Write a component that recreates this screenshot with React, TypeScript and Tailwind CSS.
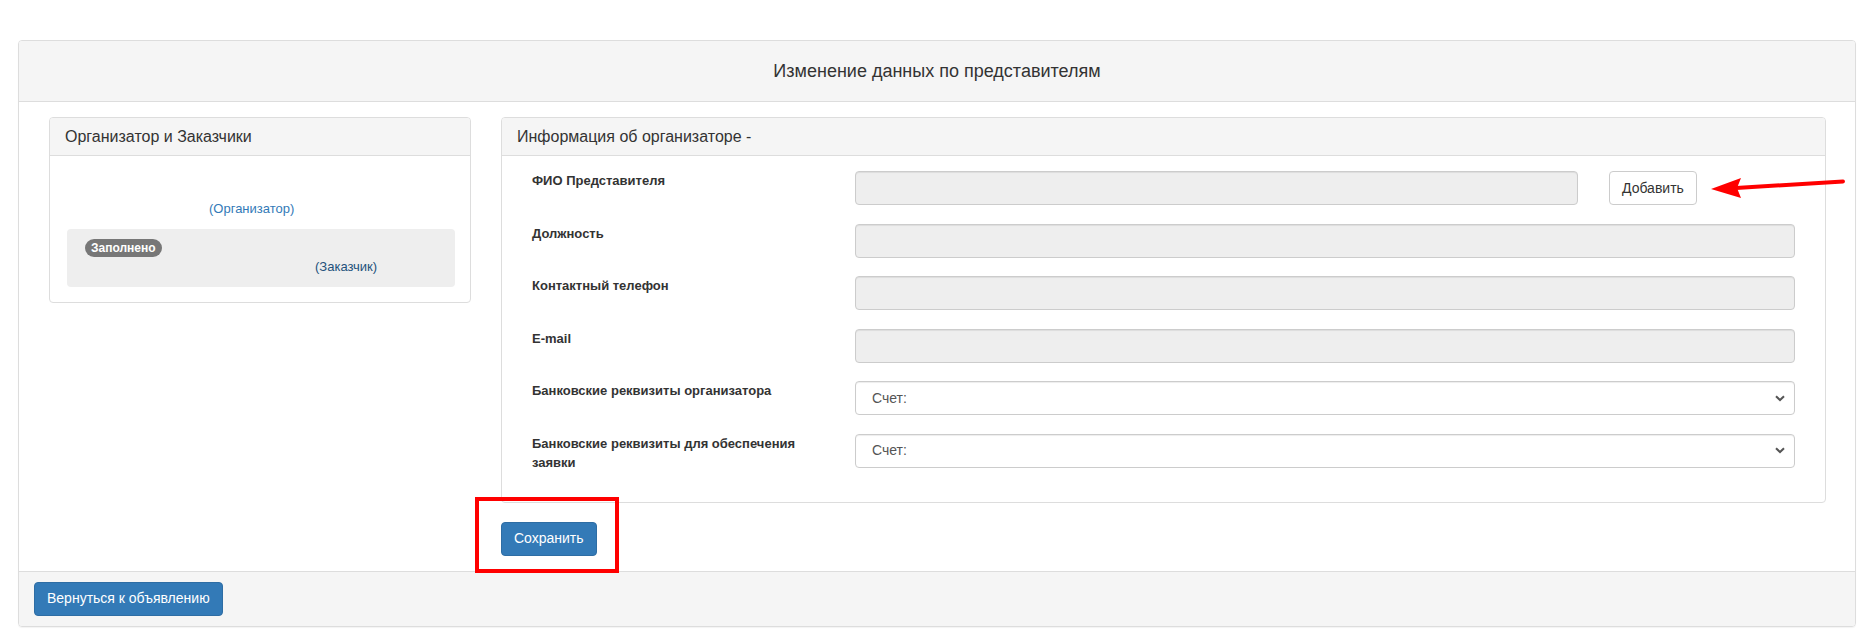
import React from "react";

const labelCls = "text-[13px] font-bold leading-[19px] text-[#333] pr-[30px]";
const inputCls =
  "h-[34px] rounded-[4px] border border-[#ccc] bg-[#eee] shadow-[inset_0_1px_1px_rgba(0,0,0,0.075)]";

const Chevron = () => (
  <svg width="10" height="7" viewBox="0 0 10 7" className="text-[#555]">
    <path d="M1 1.2 L5 5 L9 1.2" fill="none" stroke="currentColor" strokeWidth="2" />
  </svg>
);

const SelectBox = ({ text }: { text: string }) => (
  <div className="h-[34px] rounded-[4px] border border-[#ccc] bg-white flex items-center justify-between pl-[16px] pr-[9px] text-[14px] text-[#555] shadow-[inset_0_1px_1px_rgba(0,0,0,0.075)]">
    <span>{text}</span>
    <Chevron />
  </div>
);

const App = () => {
  const rows = [
    { label: "Должность" },
    { label: "Контактный телефон" },
    { label: "E-mail" },
  ];

  return (
    <div className="relative min-h-screen bg-white pt-[40px] px-[18px] font-['Liberation_Sans',Arial,sans-serif] text-[14px] text-[#333]">
      <div className="border border-[#ddd] rounded-[4px] shadow-[0_1px_1px_rgba(0,0,0,0.05)]">
        {/* heading */}
        <div className="h-[61px] bg-[#f5f5f5] border-b border-[#ddd] rounded-t-[3px] flex items-center justify-center text-[18px] text-[#333]">
          Изменение данных по представителям
        </div>

        {/* body */}
        <div className="pt-[15px] pb-[15px] pl-[30px] pr-[29px] flex gap-[30px] items-start">
          {/* left panel */}
          <div className="w-[422px] border border-[#ddd] rounded-[4px] bg-white">
            <div className="bg-[#f5f5f5] border-b border-[#ddd] rounded-t-[3px] px-[15px] py-[10px] text-[16px] leading-[17px]">
              Организатор и Заказчики
            </div>
            <div className="p-[15px]">
              <div className="px-[20px] py-[10px] leading-[18px]">
                <div className="h-[18px]"></div>
                <div className="leading-[20px] text-[13px]">
                  <span className="inline-block w-[124px]"></span>
                  <span className="text-[#337ab7]">(Организатор)</span>
                </div>
              </div>
              <div className="bg-[#eee] rounded-[4px] ml-[2px] px-[18px] py-[10px]">
                <div className="h-[18px] flex items-center">
                  <span className="inline-flex items-center h-[18px] px-[6px] rounded-[10px] bg-[#777] text-white text-[12px] font-bold">
                    Заполнено
                  </span>
                </div>
                <div className="leading-[20px] text-[13px]">
                  <span className="inline-block w-[230px]"></span>
                  <span className="text-[#23527c]">(Заказчик)</span>
                </div>
              </div>
            </div>
          </div>

          {/* right column */}
          <div className="flex-1 flex flex-col items-start">
            <div className="w-full border border-[#ddd] rounded-[4px] bg-white">
              <div className="bg-[#f5f5f5] border-b border-[#ddd] rounded-t-[3px] px-[15px] py-[10px] text-[16px] leading-[17px]">
                Информация об организаторе -
              </div>
              <div className="pt-[15px] pb-[34px] px-[30px] flex flex-col gap-[18.6px]">
                <div className="grid grid-cols-[323px_1fr] h-[34px]">
                  <div className={labelCls}>ФИО Представителя</div>
                  <div className="flex items-center gap-[31px]">
                    <div className={`${inputCls} w-[723px]`}></div>
                    <button className="h-[34px] px-[12px] rounded-[4px] border border-[#ccc] bg-white text-[14px] text-[#333]">
                      Добавить
                    </button>
                  </div>
                </div>
                {rows.map((r) => (
                  <div key={r.label} className="grid grid-cols-[323px_1fr] h-[34px]">
                    <div className={labelCls}>{r.label}</div>
                    <div className={inputCls}></div>
                  </div>
                ))}
                <div className="grid grid-cols-[323px_1fr] h-[34px]">
                  <div className={labelCls}>Банковские реквизиты организатора</div>
                  <SelectBox text="Счет:" />
                </div>
                <div className="grid grid-cols-[323px_1fr] h-[34px]">
                  <div className={labelCls}>Банковские реквизиты для обеспечения заявки</div>
                  <SelectBox text="Счет:" />
                </div>
              </div>
            </div>
            <button className="mt-[19px] h-[34px] px-[12px] rounded-[4px] border border-[#2e6da4] bg-[#337ab7] text-white text-[14px]">
              Сохранить
            </button>
          </div>
        </div>

        {/* footer */}
        <div className="bg-[#f5f5f5] border-t border-[#ddd] rounded-b-[3px] px-[15px] py-[10px]">
          <button className="h-[34px] px-[12px] rounded-[4px] border border-[#2e6da4] bg-[#337ab7] text-white text-[14px]">
            Вернуться к объявлению
          </button>
        </div>
      </div>

      {/* annotation: red frame around save */}
      <div className="absolute left-[475px] top-[497px] w-[144px] h-[76px] border-[4px] border-[#ff0000]"></div>

      {/* annotation: red arrow */}
      <svg className="absolute left-0 top-0 pointer-events-none" width="1874" height="643">
        <line x1="1736" y1="188" x2="1843" y2="181.5" stroke="#ff0000" strokeWidth="4" strokeLinecap="round" />
        <polygon points="1711,189 1741,178 1737,188 1741,198" fill="#ff0000" />
      </svg>
    </div>
  );
};

export default App;
